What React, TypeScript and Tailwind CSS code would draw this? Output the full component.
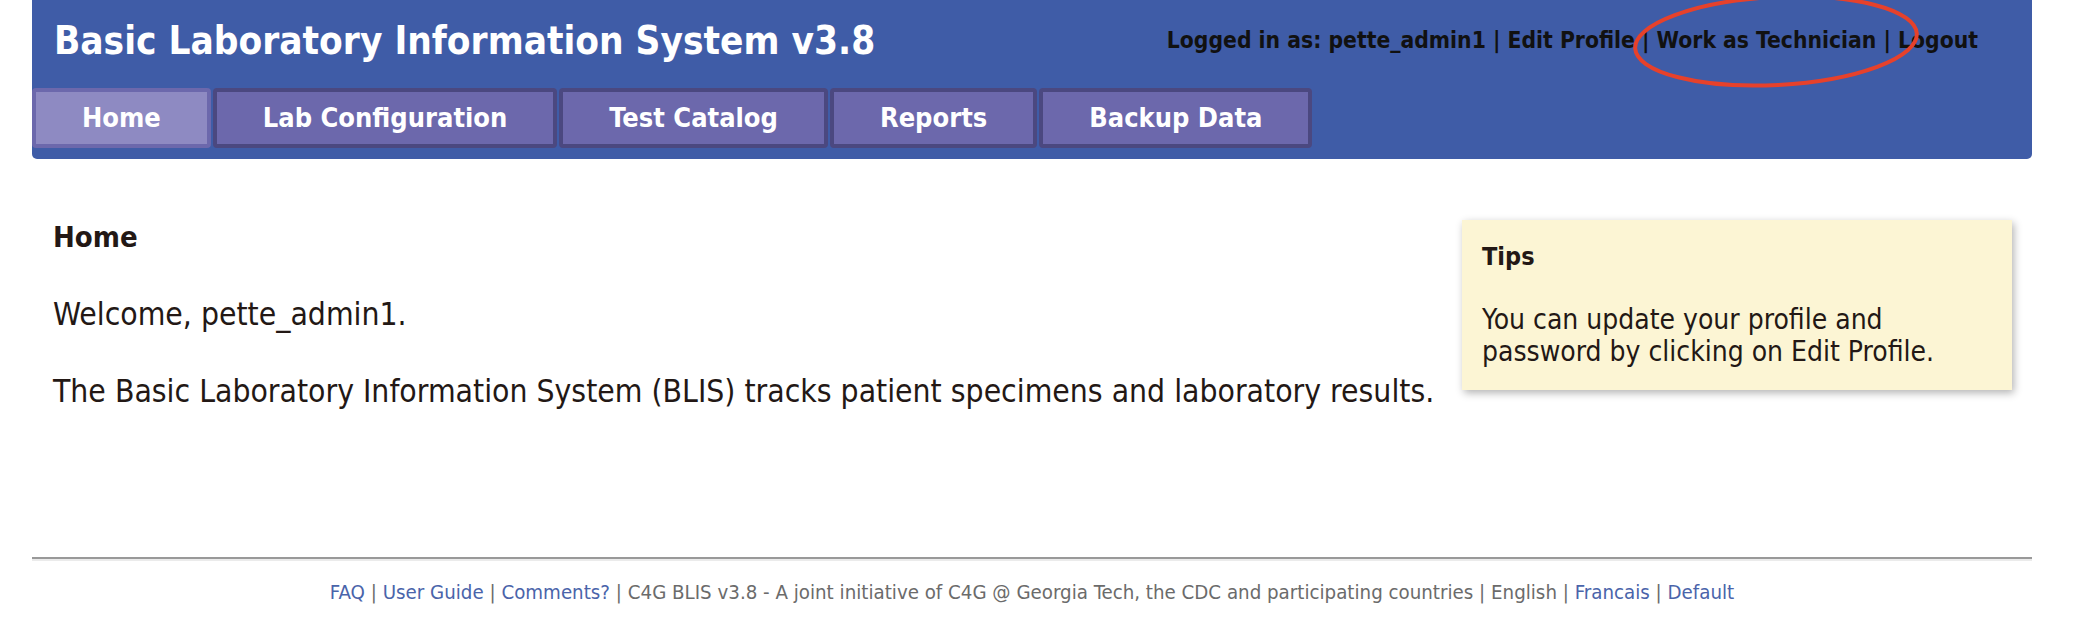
const navItems = ["Home", "Lab Configuration", "Test Catalog", "Reports", "Backup Data"];

export default function App() {
  return (
    <div className="w-[2080px] h-[643px] bg-white font-['DejaVu_Sans_Condensed','DejaVu_Sans',sans-serif] text-[#231815]">
      <div className="w-[2000px] ml-[32px]">
        {/* Header */}
        <header className="relative bg-[#3f5ca7] rounded-b-[5px] h-[159px] flex flex-col">
          <div className="flex items-center justify-between h-[88px] pl-[22px] pr-[54px]">
            <h1 className="text-[38.4px] font-bold text-white leading-none pb-[6px]">
              Basic Laboratory Information System v3.8
            </h1>
            <div className="text-[22.7px] font-bold text-[#111] pb-[8px]">
              Logged in as: pette_admin1 | Edit Profile | Work as Technician | Logout
            </div>
          </div>
          <nav className="flex gap-[2px]">
            {navItems.map((item, i) => (
              <div
                key={item}
                className={
                  i === 0
                    ? "h-[60px] px-[46px] flex items-center border-4 border-[#6c68ac] bg-[#8e8ac2] rounded-[4px] text-white font-bold text-[27px]"
                    : "h-[60px] px-[46px] flex items-center border-4 border-[#4b4880] bg-[#6c68ac] rounded-[4px] text-white font-bold text-[27px]"
                }
              >
                {item}
              </div>
            ))}
          </nav>
          {/* red annotation circle */}
          <svg
            className="absolute left-[1594px] top-[-12px] pointer-events-none"
            width="300"
            height="110"
            viewBox="0 0 300 110"
          >
            <ellipse
              cx="150"
              cy="53"
              rx="141"
              ry="44"
              fill="none"
              stroke="#e6412b"
              strokeWidth="4"
              transform="rotate(-3 150 53)"
            />
          </svg>
        </header>

        {/* Main */}
        <main className="flex justify-between pt-[61px] pl-[21px] pr-[20px] h-[398px]">
          <div>
            <h2 className="text-[29px] font-bold leading-[35px]">Home</h2>
            <p className="text-[31.6px] leading-[38px] mt-[40px]">Welcome, pette_admin1.</p>
            <p className="text-[31.6px] leading-[38px] mt-[39px]">
              The Basic Laboratory Information System (BLIS) tracks patient specimens and laboratory results.
            </p>
          </div>
          <div className="w-[550px] h-[170px] bg-[#fcf5d4] shadow-[2px_3px_8px_rgba(0,0,0,0.3)] px-[20px] pt-[20px]">
            <h3 className="text-[25px] font-bold leading-[34px]">Tips</h3>
            <p className="text-[28px] leading-[32px] mt-[30px]">
              You can update your profile and password by clicking on Edit Profile.
            </p>
          </div>
        </main>

        {/* Footer */}
        <footer>
          <div className="border-t-2 border-[#999999] border-b-2 border-b-[#ebebeb]" />
          <p className="text-center text-[20.3px] text-[#6b6b6b] mt-[19px] leading-[25px]">
            <a className="text-[#4a64aa]">FAQ</a> | <a className="text-[#4a64aa]">User Guide</a> |{" "}
            <a className="text-[#4a64aa]">Comments?</a> | C4G BLIS v3.8 - A joint initiative of C4G @ Georgia Tech, the
            CDC and participating countries | English | <a className="text-[#4a64aa]">Francais</a> |{" "}
            <a className="text-[#4a64aa]">Default</a>
          </p>
        </footer>
      </div>
    </div>
  );
}
